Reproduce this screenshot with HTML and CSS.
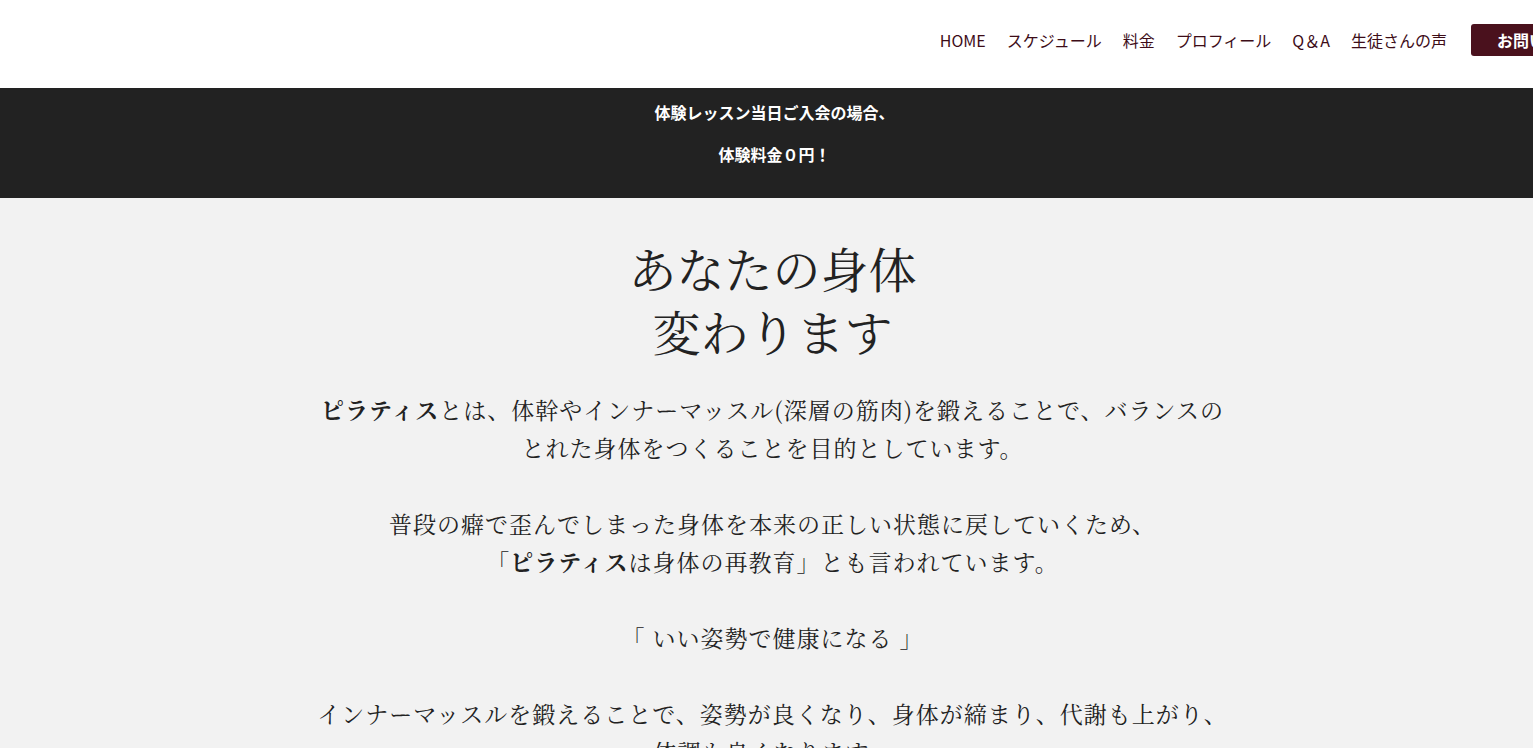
FILE: index.html
```html
<!DOCTYPE html>
<html lang="ja">
	<head>
		<meta charset="utf-8"/>
		<meta name="viewport" content="width=device-width, initial-scale=1.0"/>
		<title>ピラティス</title>
		<link rel="stylesheet" href="styles.css">
	</head>
	<body>
		<header class="site-header">
			<nav class="global-nav">
				<a href="#">HOME</a>
				<a href="#">スケジュール</a>
				<a href="#">料金</a>
				<a href="#">プロフィール</a>
				<a href="#">Q＆A</a>
				<a href="#">生徒さんの声</a>
				<a href="#" class="btn-contact">お問い合わせ</a>
			</nav>
		</header>

		<section class="notice">
			<p>体験レッスン当日ご入会の場合、</p>
			<p>体験料金０円！</p>
		</section>

		<main class="intro">
			<h1>あなたの身体<br>変わります</h1>
			<div class="intro-text">
				<p><strong>ピラティス</strong>とは、体幹やインナーマッスル(深層の筋肉)を鍛えることで、バランスの<br>とれた身体をつくることを目的としています。</p>
				<p>普段の癖で歪んでしまった身体を本来の正しい状態に戻していくため、<br>「<strong>ピラティス</strong>は身体の再教育」とも言われています。</p>
				<p>「 いい姿勢で健康になる 」</p>
				<p>インナーマッスルを鍛えることで、姿勢が良くなり、身体が締まり、代謝も上がり、<br>体調も良くなります。</p>
			</div>
		</main>
	</body>
</html>
```

FILE: styles.css
```css
html, body {
	overflow-x: hidden;
}
body {
	margin: 0;
	background: #f2f2f2;
	color: #222;
	font-family: "Noto Serif CJK JP", "Liberation Serif", "Noto Sans CJK JP", serif;
}
a {
	color: inherit;
	text-decoration: none;
}

.site-header {
	background: #fff;
	height: 88px;
	box-sizing: border-box;
	padding-bottom: 8px;
	display: flex;
	justify-content: flex-end;
	align-items: center;
	overflow: hidden;
}
.global-nav {
	display: flex;
	align-items: center;
	gap: 21px;
	margin-right: -86px;
	font-family: "Noto Sans CJK JP", sans-serif;
	font-size: 16px;
	color: #3d0c17;
}
.global-nav a {
	white-space: nowrap;
	line-height: 1;
}
.btn-contact {
	margin-left: 3px;
	background: #4a111d;
	color: #fff !important;
	font-weight: bold;
	padding: 8px 26px;
	border-radius: 3px;
}

.notice {
	background: #222;
	color: #fff;
	height: 110px;
	box-sizing: border-box;
	padding-top: 13px;
	padding-left: 16px;
	text-align: center;
	font-family: "Noto Sans CJK JP", sans-serif;
	font-weight: bold;
	font-size: 16px;
}
.notice p {
	margin: 0 0 19px 0;
	line-height: 23px;
}

.intro {
	text-align: center;
	padding-top: 38px;
	padding-left: 12px;
}
.intro h1 {
	margin: 0;
	font-weight: normal;
	font-size: 48px;
	line-height: 63px;
	color: #222;
}
.intro-text {
	max-width: 1100px;
	margin: 29px auto 0;
	font-size: 23px;
	line-height: 38px;
	letter-spacing: 1px;
	color: #222;
}
.intro-text p {
	margin: 0 0 38px 0;
}
.intro-text strong {
	font-weight: bold;
}
```
